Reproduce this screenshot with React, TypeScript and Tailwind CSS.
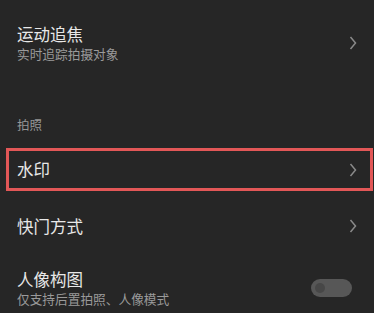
import React from "react";

function Chevron() {
  return (
    <svg width="8" height="14" viewBox="0 0 8 14" className="shrink-0">
      <polyline points="1.5,1 6.5,7 1.5,13" fill="none" stroke="#8a8a8a" strokeWidth="1.5" />
    </svg>
  );
}

export default function App() {
  return (
    <div
      className="w-[374px] h-[313px] overflow-hidden bg-[#262626]"
      style={{ fontFamily: '"Noto Sans CJK SC", "Noto Sans", sans-serif' }}
    >
      <div className="h-[85px] flex items-center justify-between pl-[17px] pr-[17px]">
        <div className="flex flex-col">
          <div className="text-[16.5px] leading-[20px] text-[#e8e8e8]">运动追焦</div>
          <div className="mt-[2px] text-[12.7px] leading-[16px] text-[#9a9a9a]">实时追踪拍摄对象</div>
        </div>
        <Chevron />
      </div>
      <div className="pt-[32px] pb-[15px] pl-[17px] text-[12.5px] leading-[16px] text-[#959595]">拍照</div>
      <div className="ml-[6px] mr-[1px] h-[43px] border-[3px] border-[#e25757] flex items-center justify-between pl-[8px] pr-[13px]">
        <div className="text-[16.5px] leading-[20px] text-[#e8e8e8] -mt-[1px]">水印</div>
        <Chevron />
      </div>
      <div className="h-[70px] flex items-center justify-between pl-[17px] pr-[17px]">
        <div className="text-[16.5px] leading-[20px] text-[#e8e8e8]">快门方式</div>
        <Chevron />
      </div>
      <div className="pt-[8px] flex items-center justify-between pl-[17px] pr-[22px]">
        <div className="flex flex-col">
          <div className="text-[16.5px] leading-[20px] text-[#e8e8e8]">人像构图</div>
          <div className="mt-[2px] text-[12.7px] leading-[16px] text-[#9a9a9a]">仅支持后置拍照、人像模式</div>
        </div>
        <div className="w-[41px] h-[18px] rounded-full bg-[#575757] flex items-center pl-[4px]">
          <div className="w-[10px] h-[10px] rounded-full bg-[#474747]" />
        </div>
      </div>
    </div>
  );
}
